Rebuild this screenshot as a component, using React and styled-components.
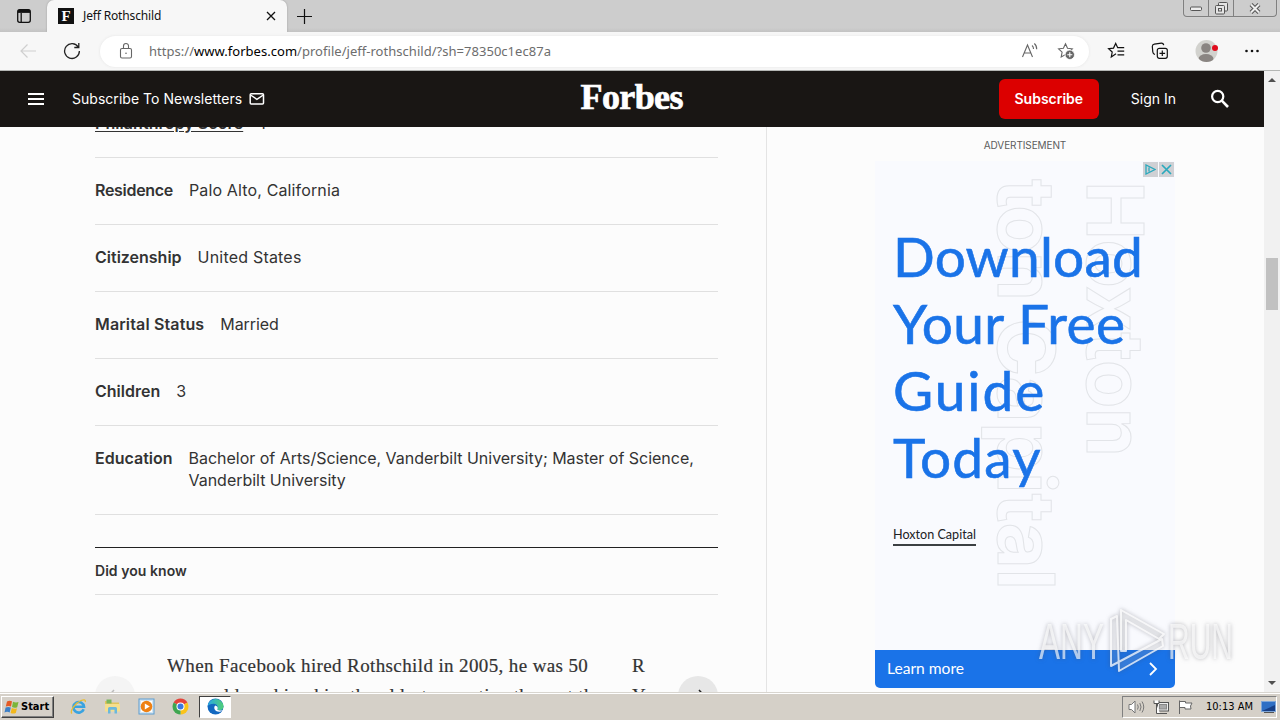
import React from "react";
import styled, { createGlobalStyle } from "styled-components";

const sans = `Inter, "Liberation Sans", sans-serif`;
const uiFont = `"Noto Sans", "Open Sans", sans-serif`;
const adFont = `Lato, "Open Sans", sans-serif`;
const taskFont = `"DejaVu Sans Condensed", "DejaVu Sans", sans-serif`;

const GlobalStyle = createGlobalStyle`
  * {
    box-sizing: border-box;
  }

  body {
    margin: 0;
    overflow: hidden;
  }

  svg {
    display: block;
    flex: none;
  }
`;

const Desktop = styled.div`
  position: relative;
  display: flex;
  flex-direction: column;
  width: 1280px;
  height: 720px;
  overflow: hidden;
  background: #fcfcfc;
`;

/* Browser chrome */

const TabStrip = styled.div`
  display: flex;
  height: 32px;
  flex: none;
  background: linear-gradient(#cdcdcd 28px, #c3c3c3);
`;

const TabActions = styled.div`
  display: flex;
  align-items: center;
  justify-content: center;
  width: 47px;
`;

const Tab = styled.div`
  display: flex;
  align-items: center;
  width: 240px;
  height: 32px;
  padding: 0 10px 0 11px;
  border-radius: 7px 7px 0 0;
  background: #f7f7f7;
  box-shadow: 0 0 2px #999;
  font: 12px/16px ${uiFont};
  letter-spacing: -0.15px;
  color: #111;
`;

const Favicon = styled.div`
  width: 16px;
  height: 16px;
  margin-right: 9px;
  background: #111;
  color: #fff;
  font: 700 15px/16px "Liberation Serif", serif;
  text-align: center;
`;

const TabTitle = styled.span`
  flex: 1;
`;

const NewTab = styled.div`
  display: flex;
  align-items: center;
  flex: 1;
  padding-left: 10px;
`;

const CaptionButtons = styled.div`
  display: flex;
  width: 94px;
  height: 17px;
  margin-right: 3px;
  border: 1px solid #808080;
  border-top: 0;
  border-radius: 0 0 4px 4px;
  box-shadow: 0 0 1px #eee;
`;

const CaptionButton = styled.div`
  display: flex;
  align-items: center;
  justify-content: center;
  width: ${(p) => p.$width}px;
  border-right: ${(p) => (p.$last ? "0" : "1px solid #808080")};
`;

const Toolbar = styled.div`
  display: flex;
  align-items: center;
  height: 39px;
  flex: none;
  background: #f7f7f7;
  border-bottom: 1px solid #b4b6b4;
`;

const NavButtons = styled.div`
  display: flex;
  gap: 26px;
  width: 100px;
  padding-left: 19px;
`;

const AddressBar = styled.div`
  display: flex;
  align-items: center;
  width: 989px;
  height: 31px;
  padding: 0 14px 0 18px;
  border-radius: 16px;
  background: #fff;
  box-shadow: 0 0 3px #e4e4e4;
`;

const Url = styled.span`
  flex: 1;
  margin-left: 15px;
  font: 13px/18px ${uiFont};
  letter-spacing: 0.03px;
  color: #6d6d6d;

  b {
    font-weight: 400;
    color: #000;
  }
`;

const AddressIcons = styled.div`
  display: flex;
  gap: 18px;
`;

const ToolbarIcons = styled.div`
  display: flex;
  align-items: center;
  justify-content: space-between;
  flex: 1;
  padding: 0 20px 0 18px;
`;

/* Page */

const Viewport = styled.div`
  display: flex;
  height: 621px;
  flex: none;
`;

const Page = styled.div`
  display: flex;
  flex-direction: column;
  width: 1264px;
  overflow: hidden;
  background: #fcfcfc;
`;

const Header = styled.header`
  z-index: 1;
  display: grid;
  grid-template-columns: 1fr 103px 1fr;
  align-items: center;
  height: 56px;
  flex: none;
  background: #191614;
  color: #fff;
  font: 14px/20px ${sans};
`;

const HeaderSide = styled.div`
  display: flex;
  align-items: center;
  justify-content: ${(p) => (p.$end ? "flex-end" : "flex-start")};
  padding: 0 34px 0 28px;
`;

const Newsletters = styled.span`
  margin: 0 7px 0 28px;
  letter-spacing: 0.03px;
`;

const Logo = styled.div`
  margin-top: -4px;
  font: 700 36px/40px "Liberation Serif", serif;
  letter-spacing: -0.6px;
  -webkit-text-stroke: 0.7px #fff;
`;

const SubscribeButton = styled.button`
  width: 100px;
  height: 40px;
  border: 0;
  border-radius: 6px;
  padding: 0;
  background: #dc0000;
  color: #fff;
  font: 600 14px/20px ${sans};
`;

const SignIn = styled.span`
  margin: 0 34px 0 32px;
`;

const Body = styled.div`
  display: flex;
  flex: 1;
  min-height: 0;
`;

const Profile = styled.main`
  width: 767px;
  padding: 0 48px 0 95px;
  border-right: 1px solid #e4e4e4;
  overflow: hidden;
  font: 16px/22px ${sans};
  color: #333;
`;

const Facts = styled.dl`
  margin: -36px 0 32px;
`;

const Fact = styled.div`
  display: flex;
  padding: 21px 0 23px;
  border-bottom: 1px solid #e0e0e0;
`;

const FactLabel = styled.dt`
  margin-right: 16px;
  font-weight: 600;
  letter-spacing: ${(p) => p.$tracking || 0}px;
  text-decoration: ${(p) => (p.$link ? "underline" : "none")};
  text-underline-offset: 2px;
`;

const FactValue = styled.dd`
  margin: 0;
  letter-spacing: ${(p) => p.$tracking || 0}px;
`;

const DidYouKnow = styled.h2`
  margin: 0;
  padding: 13px 0 13px;
  border-top: 1px solid #222;
  border-bottom: 1px solid #e0e0e0;
  font: 600 14px/20px ${sans};
  letter-spacing: 0.05px;
`;

const Carousel = styled.div`
  display: flex;
  padding-top: 56px;
`;

const CarouselArrow = styled.div`
  display: flex;
  align-items: center;
  justify-content: center;
  width: 40px;
  height: 40px;
  flex: none;
  margin-top: 25px;
  border-radius: 50%;
  background: ${(p) => (p.$muted ? "#f4f4f4" : "#e7e7e7")};
`;

const Slides = styled.div`
  display: flex;
  width: 491px;
  gap: 44px;
  margin: 0 25px 0 32px;
  overflow: hidden;
  font: 19px/30px "Liberation Serif", serif;
  letter-spacing: 0.38px;
  -webkit-text-stroke: 0.2px #333;
  white-space: nowrap;
`;

const Slide = styled.div`
  width: 421px;
  flex: none;
`;

/* Advertisement */

const Sidebar = styled.aside`
  display: flex;
  flex-direction: column;
  align-items: center;
  width: 300px;
  margin-left: 108px;
`;

const AdLabel = styled.div`
  height: 34px;
  padding-top: 11px;
  font: 10px/14px ${sans};
  letter-spacing: -0.1px;
  color: #5c5c5c;
`;

const Ad = styled.div`
  position: relative;
  display: flex;
  flex-direction: column;
  width: 300px;
  height: 527px;
  background: #f9fafe;
`;

const AdBackdrop = styled.svg`
  position: absolute;
  top: 0;
  left: 0;
`;

const AdBadges = styled.div`
  display: flex;
  justify-content: flex-end;
  gap: 1px;
  padding: 1px 1px 0 0;
`;

const AdBadge = styled.div`
  display: flex;
  align-items: center;
  justify-content: center;
  width: 15px;
  height: 15px;
  background: #cfd0d4;
`;

const AdTitle = styled.div`
  position: relative;
  margin: 46px 0 0 18px;
  font: 55px/67px ${adFont};
  color: #1a73e8;
  -webkit-text-stroke: 0.6px #1a73e8;
`;

const AdTitleLine = styled.div`
  letter-spacing: ${(p) => p.$tracking}px;
`;

const AdAdvertiser = styled.div`
  position: relative;
  align-self: flex-start;
  margin: 34px 0 0 18px;
  border-bottom: 2px solid #3c4043;
  font: 12.6px/19px ${adFont};
  color: #202124;
`;

const AdAction = styled.div`
  display: flex;
  align-items: center;
  justify-content: space-between;
  height: 38px;
  margin-top: auto;
  padding: 0 17px 3px 12px;
  border-radius: 0 0 5px 5px;
  background: #1a73e8;
  color: #fff;
  font: 15.6px/20px ${adFont};

  svg {
    margin-top: 2px;
  }
`;

const Scrollbar = styled.div`
  display: flex;
  flex-direction: column;
  align-items: center;
  width: 16px;
  padding: 6px 0;
  background: #f1f1f1;
`;

const ScrollThumb = styled.div`
  width: 12px;
  height: 52px;
  margin: 176px 0 auto;
  background: #c1c1c1;
`;

/* Taskbar */

const Taskbar = styled.div`
  display: flex;
  align-items: center;
  flex: 1;
  border-top: 1px solid #d8d5cf;
  box-shadow: inset 0 1px #fff;
  padding: 0 3px 0 1px;
  background: #d5d0c8;
  font: 11px/14px ${taskFont};
  color: #000;
`;

const StartButton = styled.div`
  display: flex;
  align-items: center;
  width: 53px;
  height: 22px;
  padding-left: 2px;
  gap: 1px;
  border: 1px solid;
  border-color: #fff #404040 #404040 #fff;
  box-shadow: inset -1px -1px #808080;
  font-weight: 700;
`;

const QuickLaunch = styled.div`
  display: flex;
  gap: 17px;
  margin-left: 16px;
`;

const ActiveTask = styled.div`
  display: flex;
  align-items: center;
  justify-content: center;
  width: 32px;
  height: 22px;
  margin-left: 10px;
  border: 1px solid;
  border-color: #404040 #fff #fff #404040;
  background: #fff;
`;

const Tray = styled.div`
  display: flex;
  align-items: center;
  width: 155px;
  height: 22px;
  margin-left: auto;
  padding-left: 5px;
  gap: 8px;
  border: 1px solid;
  border-color: #808080 #fff #fff #808080;
`;

const Clock = styled.span`
  margin-left: 5px;
  white-space: nowrap;
`;

const Watermark = styled.svg`
  position: absolute;
  left: 1030px;
  top: 600px;
  filter: drop-shadow(0 0 2px rgba(70, 70, 80, 0.55));
`;

const facts = [
  { label: "Philanthropy Score", value: "1", link: true, labelTracking: 0.08 },
  { label: "Residence", value: "Palo Alto, California", labelTracking: -0.3, valueTracking: 0.14 },
  { label: "Citizenship", value: "United States", valueTracking: 0.2 },
  { label: "Marital Status", value: "Married", labelTracking: 0.14, valueTracking: -0.1 },
  { label: "Children", value: "3" },
  {
    label: "Education",
    value: "Bachelor of Arts/Science, Vanderbilt University; Master of Science, Vanderbilt University",
    valueTracking: -0.02,
  },
];

const adTitle = [
  { text: "Download", tracking: 0.2 },
  { text: "Your Free", tracking: 0.4 },
  { text: "Guide", tracking: 2 },
  { text: "Today", tracking: 1.2 },
];

const TabActionsIcon = () => (
  <svg width="16" height="16" viewBox="0 0 16 16" fill="none" stroke="#111" strokeWidth="1.3">
    <rect x="1.7" y="1.7" width="12.6" height="12.6" rx="2" />
    <path d="M2 3.4h12" strokeWidth="3" />
    <path d="M5.2 5v9" />
  </svg>
);

const BackIcon = () => (
  <svg width="18" height="18" viewBox="0 0 18 18" fill="none" stroke="#cfcfcf" strokeWidth="1.2">
    <path d="M17 9H2M8.5 2.5 2 9l6.5 6.5" />
  </svg>
);

const RefreshIcon = () => (
  <svg width="18" height="18" viewBox="0 0 18 18" fill="none" stroke="#222" strokeWidth="1.3">
    <path d="M15.3 5.2A7.4 7.4 0 1 0 16.4 9M15.8 1v4.5h-4.5" />
  </svg>
);

const LockIcon = () => (
  <svg width="16" height="18" viewBox="0 0 16 18" fill="none" stroke="#666" strokeWidth="1.1">
    <rect x="2.5" y="6.5" width="11" height="9.5" rx="1.5" />
    <path d="M5.5 6.5V4a2.5 2.5 0 0 1 5 0v2.5" />
    <circle cx="8" cy="11.3" r="0.8" fill="#666" stroke="none" />
  </svg>
);

const ReadAloudIcon = () => (
  <svg width="18" height="18" viewBox="0 0 18 18" fill="none" stroke="#666" strokeWidth="1.1">
    <path d="M1.5 15 6.5 3l5 12M3.2 11h6.6M11 3.5q1.6 1.3 1.5 3.5M13.3 1.5q2.6 2.2 2.4 5.8" />
  </svg>
);

const starPath = "M8.5 1.8l2 4.4 4.8.6-3.5 3.3.9 4.8-4.2-2.3-4.3 2.3.9-4.8L1.6 6.8l4.8-.6z";

const AddFavoriteIcon = () => (
  <svg width="18" height="18" viewBox="0 0 18 18" fill="none" stroke="#666" strokeWidth="1.1">
    <path d={starPath} />
    <circle cx="12.8" cy="12.8" r="4.7" fill="#666" stroke="#fff" strokeWidth="0.8" />
    <path d="M10.3 12.8h5M12.8 10.3v5" stroke="#fff" />
  </svg>
);

const FavoritesIcon = () => (
  <svg width="19" height="18" viewBox="0 0 19 18" fill="none" stroke="#111" strokeWidth="1.2">
    <path d="M9 11.7l-4.7 3.2.9-4.9L1.6 6.6l4.9-.5 2.2-4.6 2 4.2h6.5M10.5 9.2h6.7M10.5 12.9h6.7" />
  </svg>
);

const CollectionsIcon = () => (
  <svg width="18" height="18" viewBox="0 0 18 18" fill="none" stroke="#111" strokeWidth="1.2">
    <rect x="6.3" y="6.3" width="10" height="10" rx="2" />
    <path d="M11.3 8.5v5.6M8.5 11.3h5.6" />
    <path d="M4 12.5q-2-.5-2.2-2.5L1.3 4.5q0-2 2-2.3l7-1q2-.1 2.5 2" />
  </svg>
);

const AvatarIcon = () => (
  <svg width="24" height="24" viewBox="0 0 24 24">
    <clipPath id="avatarClip">
      <circle cx="11.5" cy="12" r="11" />
    </clipPath>
    <g clipPath="url(#avatarClip)">
      <rect width="24" height="24" fill="#d2d2ce" />
      <circle cx="11" cy="9" r="4.8" fill="#8a8582" />
      <ellipse cx="11" cy="20" rx="7.5" ry="5" fill="#8a8582" />
    </g>
    <circle cx="20" cy="9" r="3" fill="#e00b1c" />
  </svg>
);

const MoreIcon = () => (
  <svg width="16" height="4" viewBox="0 0 16 4" fill="#111">
    <circle cx="2.5" cy="2" r="1.3" />
    <circle cx="8" cy="2" r="1.3" />
    <circle cx="13.5" cy="2" r="1.3" />
  </svg>
);

const MailIcon = () => (
  <svg width="16" height="14" viewBox="0 0 16 14" fill="none" stroke="#fff" strokeWidth="1.5">
    <rect x="1.2" y="1.7" width="13.3" height="10.3" rx="1" />
    <path d="M1.5 3l6.4 4.3L14.3 3" />
  </svg>
);

const MenuIcon = () => (
  <svg width="16" height="14" viewBox="0 0 16 14" fill="#fff">
    <path d="M0 1h16v2H0zM0 6h16v2H0zM0 11h16v2H0z" />
  </svg>
);

const SearchIcon = () => (
  <svg width="20" height="20" viewBox="0 0 20 20" fill="none" stroke="#fff" strokeWidth="2.2">
    <circle cx="7.7" cy="7.5" r="5.6" />
    <path d="M11.8 11.7 18 18" strokeWidth="2.6" />
  </svg>
);

const ChromeIcon = () => (
  <svg width="17" height="17" viewBox="0 0 17 17">
    <path d="M8.5 8.5 1.6 4.5A8 8 0 0 1 15.4 4.5z" fill="#e5433a" />
    <path d="M8.5 8.5 15.4 4.5A8 8 0 0 1 8.5 16.5z" fill="#fbc318" />
    <path d="M8.5 8.5 8.5 16.5A8 8 0 0 1 1.6 4.5z" fill="#3fa650" />
    <circle cx="8.5" cy="8.5" r="4" fill="#fff" />
    <circle cx="8.5" cy="8.5" r="3" fill="#3b78e0" />
  </svg>
);

const EdgeIcon = () => (
  <svg width="17" height="17" viewBox="0 0 17 17">
    <defs>
      <linearGradient id="edgeTop" x1="0" x2="1">
        <stop offset="0" stopColor="#28a8e6" />
        <stop offset="1" stopColor="#50cf76" />
      </linearGradient>
    </defs>
    <circle cx="8.5" cy="8.5" r="8" fill="#1268c0" />
    <path
      d="M.6 8A8 8 0 0 1 16.5 8.5c0 2.5-2 3.8-4.2 3.7-1.8-.1-2.7-.8-2-1.7C11.5 8.5 9.8 6 7 5.8 3.8 5.700 1.500 7 .6 8z"
      fill="url(#edgeTop)"
    />
    <path d="M8.2 7.600c-1.800 1.500-1 5.200 2.300 6 1.800.4 3.700-.1 5-1.200L17 17l1-6-2.300 1.300c-2 .5-4.500 0-5.500-.9 1-1.500.5-3.200-2-3.800z" fill="#fff" />
  </svg>
);

const IeIcon = () => (
  <svg width="17" height="17" viewBox="0 0 17 17" fill="none">
    <path d="M13.7 11.2A5.3 5.3 0 1 1 14 8.7H4.5" stroke="#39a3e0" strokeWidth="2.6" />
    <path d="M2 15.5C-.5 13.5 5 5 11 2.5c3-1.3 4.8-.8 4.2 1.500" stroke="#e8bd34" strokeWidth="1.3" />
  </svg>
);

const FolderIcon = () => (
  <svg width="17" height="17" viewBox="0 0 17 17">
    <path d="M1 3h5l1.5 1.5H15V13H1z" fill="#e2c45c" />
    <path d="M2.5 1.5h5v4h-5z" fill="#79b65c" />
    <path d="M1 6h15v7.5H1z" fill="#f5df8e" />
    <path d="M4 15.5v-5q0-1.500 1.500-1.500h6q1.500 0 1.500 1.500v5h-2.500v-3.700h-4v3.700z" fill="#6bb8dc" />
  </svg>
);

const PlayerIcon = () => (
  <svg width="17" height="17" viewBox="0 0 17 17">
    <rect x="1" y="1" width="15" height="15" fill="#d3e5f2" stroke="#5c9ccf" />
    <rect x="3" y="3" width="11" height="11" fill="#fff" />
    <circle cx="8.5" cy="8.5" r="5.8" fill="#ee8114" />
    <path d="M6.8 5.5 11.8 8.5l-5 3z" fill="#fff" />
  </svg>
);

const WindowsIcon = () => (
  <svg width="16" height="16" viewBox="0 0 16 16">
    <path d="M3 2.5q2.5-1.5 5-.2L7 7.5Q4.500 6.300 1.800 7.600z" fill="#e45a24" />
    <path d="M9 2.800q2.700 1.400 5.500.3L13.200 8.200q-2.700 1.100-5.200-.2z" fill="#7bb53a" />
    <path d="M1.600 8.600q2.700-1.300 5.200 0L5.700 13.500q-2.500-1.300-5.200 0z" fill="#3c7fc6" />
    <path d="M7.800 9q2.600 1.300 5.200.2L11.800 14q-2.700 1.200-5.200-.1z" fill="#f2b81c" />
  </svg>
);

const TrayIcons = () => (
  <>
    <svg width="17" height="16" viewBox="0 0 17 16" fill="#fff" stroke="#777">
      <path d="M1 5.5h2.5L7 2v12l-3.5-3.5H1z" />
      <path d="M9.5 5.5q1.5 2.5 0 5M11.8 4q2.5 4 0 8M14 2.5q3.5 5.5 0 11" fill="none" />
    </svg>
    <svg width="16" height="16" viewBox="0 0 16 16" fill="#eee" stroke="#555">
      <rect x="4.5" y="3.5" width="11" height="8.5" />
      <rect x="6.5" y="5.5" width="7" height="4.5" fill="#aaa" stroke="#888" />
      <path d="M7 14.5h7" />
      <path d="M1 1.5v3h5v-3M3.5 5v9.5H7" fill="#fff" />
    </svg>
    <svg width="16" height="16" viewBox="0 0 16 16" fill="#fff" stroke="#666">
      <path d="M2.5 15V1.5M2.5 2.5h6v1.5h6.5l-1.5 3 .5 3h-6v-1.5h-5.500z" />
    </svg>
  </>
);

const Arrow = ({ back }) => (
  <svg width="16" height="14" viewBox="0 0 16 14" fill="none" stroke={back ? "#bbb" : "#222"} strokeWidth="1.5">
    <path d={back ? "M15 7H2M7 1 1.5 7 7 13" : "M1 7h13M9 1l5.5 6L9 13"} />
  </svg>
);

const App = () => {
  return (
    <>
      <GlobalStyle />
      <Desktop>
        <TabStrip>
          <TabActions>
            <TabActionsIcon />
          </TabActions>
          <Tab>
            <Favicon>F</Favicon>
            <TabTitle>Jeff Rothschild</TabTitle>
            <svg width="12" height="12" viewBox="0 0 12 12" stroke="#111" strokeWidth="1.3">
              <path d="M2 2l8 8M10 2l-8 8" />
            </svg>
          </Tab>
          <NewTab>
            <svg width="15" height="15" viewBox="0 0 15 15" stroke="#111" strokeWidth="1.2">
              <path d="M7.5 0v15M0 7.5h15" />
            </svg>
          </NewTab>
          <CaptionButtons>
            <CaptionButton $width={25}>
              <svg width="12" height="6" viewBox="0 0 12 6" fill="#eee" stroke="#555">
                <rect x="0.5" y="2" width="11" height="3.5" rx="1" />
              </svg>
            </CaptionButton>
            <CaptionButton $width={25}>
              <svg width="13" height="13" viewBox="0 0 13 13" fill="#e4e4e4" stroke="#555">
                <rect x="3.5" y="0.5" width="9" height="8.5" rx="1" />
                <rect x="0.5" y="3.5" width="9" height="8.5" rx="1" />
                <rect x="3.5" y="6.5" width="3" height="2.5" />
              </svg>
            </CaptionButton>
            <CaptionButton $width={42} $last>
              <svg width="12" height="11" viewBox="0 0 12 11">
                <path d="M2 1.5l8 8M10 1.5l-8 8" stroke="#555" strokeWidth="4" />
                <path d="M2 1.5l8 8M10 1.5l-8 8" stroke="#eee" strokeWidth="2" />
              </svg>
            </CaptionButton>
          </CaptionButtons>
        </TabStrip>

        <Toolbar>
          <NavButtons>
            <BackIcon />
            <RefreshIcon />
          </NavButtons>
          <AddressBar>
            <LockIcon />
            <Url>
              https://<b>www.forbes.com</b>/profile/jeff-rothschild/?sh=78350c1ec87a
            </Url>
            <AddressIcons>
              <ReadAloudIcon />
              <AddFavoriteIcon />
            </AddressIcons>
          </AddressBar>
          <ToolbarIcons>
            <FavoritesIcon />
            <CollectionsIcon />
            <AvatarIcon />
            <MoreIcon />
          </ToolbarIcons>
        </Toolbar>

        <Viewport>
          <Page>
            <Header>
              <HeaderSide>
                <MenuIcon />
                <Newsletters>Subscribe To Newsletters</Newsletters>
                <MailIcon />
              </HeaderSide>
              <Logo>Forbes</Logo>
              <HeaderSide $end>
                <SubscribeButton>Subscribe</SubscribeButton>
                <SignIn>Sign In</SignIn>
                <SearchIcon />
              </HeaderSide>
            </Header>
            <Body>
              <Profile>
                <Facts>
                  {facts.map((fact) => (
                    <Fact key={fact.label}>
                      <FactLabel $link={fact.link} $tracking={fact.labelTracking}>
                        {fact.label}
                      </FactLabel>
                      <FactValue $tracking={fact.valueTracking}>{fact.value}</FactValue>
                    </Fact>
                  ))}
                </Facts>
                <DidYouKnow>Did you know</DidYouKnow>
                <Carousel>
                  <CarouselArrow $muted>
                    <Arrow back />
                  </CarouselArrow>
                  <Slides>
                    <Slide>
                      When Facebook hired Rothschild in 2005, he was 50
                      <br />
                      years old, making him the oldest executive there at the
                    </Slide>
                    <Slide>
                      R
                      <br />
                      Y
                    </Slide>
                  </Slides>
                  <CarouselArrow>
                    <Arrow />
                  </CarouselArrow>
                </Carousel>
              </Profile>
              <Sidebar>
                <AdLabel>ADVERTISEMENT</AdLabel>
                <Ad>
                  <AdBackdrop
                    width="300"
                    height="489"
                    viewBox="0 0 300 489"
                    fill="none"
                    stroke="#e2e4e8"
                    fontFamily="Inter, sans-serif"
                    fontWeight="700"
                    fontSize="79"
                  >
                    <text transform="translate(212 20) rotate(90)" textLength="276">
                      Hoxton
                    </text>
                    <text transform="translate(123 18) rotate(90)" textLength="122">
                      ton
                    </text>
                    <text transform="translate(123 157) rotate(90)" textLength="272">
                      Capital
                    </text>
                  </AdBackdrop>
                  <AdBadges>
                    <AdBadge>
                      <svg width="11" height="11" viewBox="0 0 11 11" fill="none" stroke="#2aa9bd" strokeWidth="1.3">
                        <path d="M1 1v9l9-4.5zM4 3.5v4" />
                      </svg>
                    </AdBadge>
                    <AdBadge>
                      <svg width="11" height="11" viewBox="0 0 11 11" stroke="#2aa9bd" strokeWidth="1.7">
                        <path d="M1 1l9 9M10 1l-9 9" />
                      </svg>
                    </AdBadge>
                  </AdBadges>
                  <AdTitle>
                    {adTitle.map((line) => (
                      <AdTitleLine key={line.text} $tracking={line.tracking}>
                        {line.text}
                      </AdTitleLine>
                    ))}
                  </AdTitle>
                  <AdAdvertiser>Hoxton Capital</AdAdvertiser>
                  <AdAction>
                    Learn more
                    <svg width="10" height="14" viewBox="0 0 10 14" fill="none" stroke="#fff" strokeWidth="1.8">
                      <path d="M2 1l6 6-6 6" />
                    </svg>
                  </AdAction>
                </Ad>
              </Sidebar>
            </Body>
          </Page>
          <Scrollbar>
            <svg width="8" height="5" viewBox="0 0 8 5" fill="#505050">
              <path d="M0 5l4-4 4 4z" />
            </svg>
            <ScrollThumb />
            <svg width="8" height="5" viewBox="0 0 8 5" fill="#505050">
              <path d="M0 0l4 4 4-4z" />
            </svg>
          </Scrollbar>
        </Viewport>

        <Taskbar>
          <StartButton>
            <WindowsIcon />
            Start
          </StartButton>
          <QuickLaunch>
            <IeIcon />
            <FolderIcon />
            <PlayerIcon />
            <ChromeIcon />
          </QuickLaunch>
          <ActiveTask>
            <EdgeIcon />
          </ActiveTask>
          <Tray>
            <TrayIcons />
            <Clock>10:13 AM</Clock>
            <svg width="16" height="14" viewBox="0 0 16 14">
              <rect x="0.5" y="1.5" width="14" height="10" fill="#2f6fc4" stroke="#7ea6d8" />
              <path d="M1 11l13-6v6z" fill="#173f86" />
              <path d="M3 12.5h10" stroke="#555" />
            </svg>
          </Tray>
        </Taskbar>

        <Watermark width="210" height="84" viewBox="0 0 210 84">
          <g fill="#fff" fillOpacity="0.65" fontFamily="'Liberation Sans', sans-serif" fontSize="50">
            <text x="9" y="59" textLength="65" lengthAdjust="spacingAndGlyphs">
              ANY
            </text>
            <text x="138" y="59" textLength="65" lengthAdjust="spacingAndGlyphs">
              RUN
            </text>
          </g>
          <g fill="#fff" fillOpacity="0.2" stroke="#fff" strokeOpacity="0.75" strokeWidth="2" strokeLinejoin="round">
            <path d="M91 10l43 24-5 5-33-19v31h-5z" />
            <path d="M87 16l-6 3v47l51-27 1 7-44 25z" fillOpacity="0.1" />
          </g>
        </Watermark>
      </Desktop>
    </>
  );
};

export default App;
